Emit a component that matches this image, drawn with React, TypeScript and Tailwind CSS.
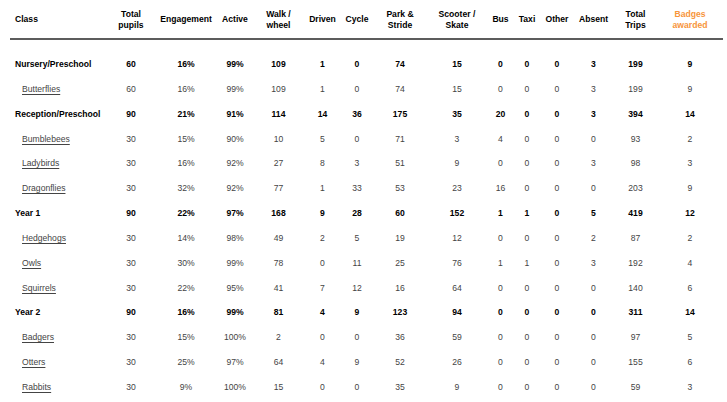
const COLS = "grid-cols-[98px_46px_64px_34px_53px_35px_34px_52px_62px_25px_28px_32px_41px_43px_66px]";

const HEADERS = [
  "Total\npupils",
  "Engagement",
  "Active",
  "Walk /\nwheel",
  "Driven",
  "Cycle",
  "Park &\nStride",
  "Scooter /\nSkate",
  "Bus",
  "Taxi",
  "Other",
  "Absent",
  "Total\nTrips",
];

type Row = { name: string; group?: boolean; values: (string | number)[] };

const ROWS: Row[] = [
  { name: "Nursery/Preschool", group: true, values: [60, "16%", "99%", 109, 1, 0, 74, 15, 0, 0, 0, 3, 199, 9] },
  { name: "Butterflies", values: [60, "16%", "99%", 109, 1, 0, 74, 15, 0, 0, 0, 3, 199, 9] },
  { name: "Reception/Preschool", group: true, values: [90, "21%", "91%", 114, 14, 36, 175, 35, 20, 0, 0, 3, 394, 14] },
  { name: "Bumblebees", values: [30, "15%", "90%", 10, 5, 0, 71, 3, 4, 0, 0, 0, 93, 2] },
  { name: "Ladybirds", values: [30, "16%", "92%", 27, 8, 3, 51, 9, 0, 0, 0, 3, 98, 3] },
  { name: "Dragonflies", values: [30, "32%", "92%", 77, 1, 33, 53, 23, 16, 0, 0, 0, 203, 9] },
  { name: "Year 1", group: true, values: [90, "22%", "97%", 168, 9, 28, 60, 152, 1, 1, 0, 5, 419, 12] },
  { name: "Hedgehogs", values: [30, "14%", "98%", 49, 2, 5, 19, 12, 0, 0, 0, 2, 87, 2] },
  { name: "Owls", values: [30, "30%", "99%", 78, 0, 11, 25, 76, 1, 1, 0, 3, 192, 4] },
  { name: "Squirrels", values: [30, "22%", "95%", 41, 7, 12, 16, 64, 0, 0, 0, 0, 140, 6] },
  { name: "Year 2", group: true, values: [90, "16%", "99%", 81, 4, 9, 123, 94, 0, 0, 0, 0, 311, 14] },
  { name: "Badgers", values: [30, "15%", "100%", 2, 0, 0, 36, 59, 0, 0, 0, 0, 97, 5] },
  { name: "Otters", values: [30, "25%", "97%", 64, 4, 9, 52, 26, 0, 0, 0, 0, 155, 6] },
  { name: "Rabbits", values: [30, "9%", "100%", 15, 0, 0, 35, 9, 0, 0, 0, 0, 59, 3] },
];

export default function App() {
  return (
    <div className="w-[727px] h-[402px] overflow-hidden bg-white pl-[10px] pr-[4px] font-['Liberation_Sans',Arial,sans-serif] text-[8.6px]">
      {/* Header */}
      <div className={`grid ${COLS} h-[40px] pt-[1px] border-b-2 border-[#5c5c5c] font-bold text-black`}>
        <div className="flex items-center pl-[5px]">Class</div>
        {HEADERS.map((h) => (
          <div key={h} className="flex items-center justify-center text-center whitespace-pre-line leading-[10.5px]">
            {h}
          </div>
        ))}
        <div className="flex items-center justify-center text-center leading-[10.5px] text-[#f7953b]">
          Badges
          <br />
          awarded
        </div>
      </div>

      {/* Body */}
      <div className="pt-[12px]">
        {ROWS.map((r) => (
          <div
            key={r.name}
            className={`grid ${COLS} h-[24.85px] items-center ${r.group ? "font-bold text-black" : "text-[#444]"}`}
          >
            <div className={r.group ? "pl-[5px]" : "pl-[12px]"}>
              {r.group ? r.name : <span className="underline underline-offset-[1.5px]">{r.name}</span>}
            </div>
            {r.values.map((v, i) => (
              <div key={i} className="text-center">
                {v}
              </div>
            ))}
          </div>
        ))}
      </div>
    </div>
  );
}
